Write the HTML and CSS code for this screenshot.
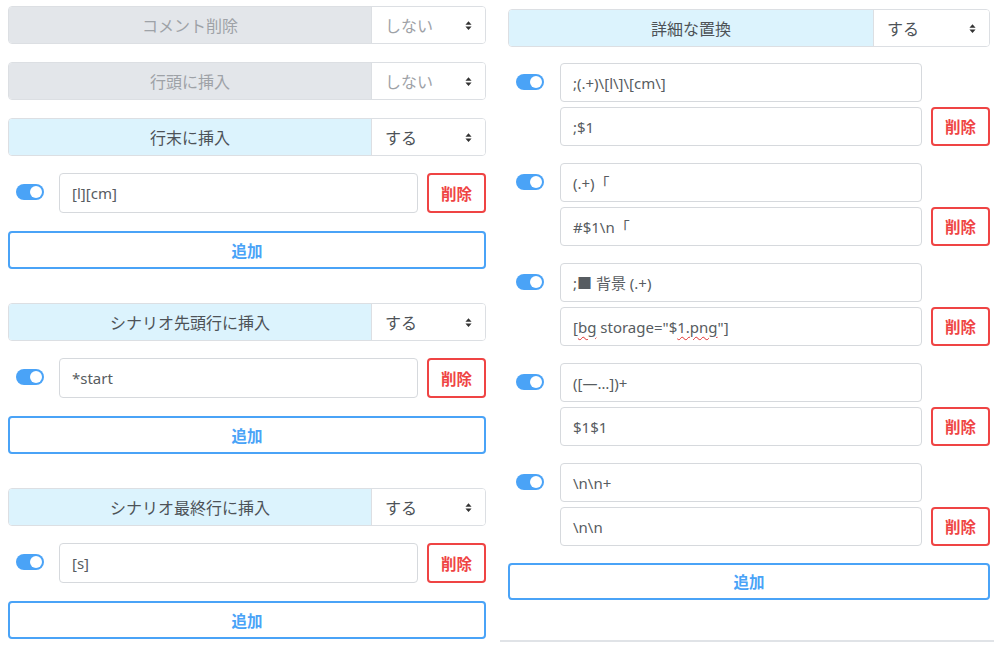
FILE: index.html
```html
<!DOCTYPE html>
<html lang="ja">
<head>
<meta charset="utf-8">
<link rel="stylesheet" href="styles.css">
</head>
<body>
<div class="page">
  <div class="col col-left">
    <div class="setting">
      <div class="label off">コメント削除</div>
      <div class="select muted">しない<svg class="caret" viewBox="0 0 8 12"><path d="M4 1 L7.5 5 H0.5 Z M4 11 L7.5 7 H0.5 Z"/></svg></div>
    </div>
    <div class="setting">
      <div class="label off">行頭に挿入</div>
      <div class="select muted">しない<svg class="caret" viewBox="0 0 8 12"><path d="M4 1 L7.5 5 H0.5 Z M4 11 L7.5 7 H0.5 Z"/></svg></div>
    </div>
    <div class="setting last">
      <div class="label on">行末に挿入</div>
      <div class="select">する<svg class="caret" viewBox="0 0 8 12"><path d="M4 1 L7.5 5 H0.5 Z M4 11 L7.5 7 H0.5 Z"/></svg></div>
    </div>
    <div class="entry">
      <span class="toggle"></span>
      <div class="field">[l][cm]</div>
      <button class="del">削除</button>
    </div>
    <button class="add">追加</button>

    <div class="setting section last">
      <div class="label on">シナリオ先頭行に挿入</div>
      <div class="select">する<svg class="caret" viewBox="0 0 8 12"><path d="M4 1 L7.5 5 H0.5 Z M4 11 L7.5 7 H0.5 Z"/></svg></div>
    </div>
    <div class="entry">
      <span class="toggle"></span>
      <div class="field">*start</div>
      <button class="del">削除</button>
    </div>
    <button class="add">追加</button>

    <div class="setting section last">
      <div class="label on">シナリオ最終行に挿入</div>
      <div class="select">する<svg class="caret" viewBox="0 0 8 12"><path d="M4 1 L7.5 5 H0.5 Z M4 11 L7.5 7 H0.5 Z"/></svg></div>
    </div>
    <div class="entry">
      <span class="toggle"></span>
      <div class="field">[s]</div>
      <button class="del">削除</button>
    </div>
    <button class="add">追加</button>
  </div>

  <div class="col col-right">
    <div class="setting">
      <div class="label on">詳細な置換</div>
      <div class="select wide">する<svg class="caret" viewBox="0 0 8 12"><path d="M4 1 L7.5 5 H0.5 Z M4 11 L7.5 7 H0.5 Z"/></svg></div>
    </div>

    <div class="pair">
      <span class="toggle"></span>
      <div class="fields">
        <div class="row"><div class="field">;(.+)\[l\]\[cm\]</div><span class="spacer"></span></div>
        <div class="row"><div class="field">;$1</div><button class="del">削除</button></div>
      </div>
    </div>
    <div class="pair">
      <span class="toggle"></span>
      <div class="fields">
        <div class="row"><div class="field">(.+)「</div><span class="spacer"></span></div>
        <div class="row"><div class="field">#$1\n「</div><button class="del">削除</button></div>
      </div>
    </div>
    <div class="pair">
      <span class="toggle"></span>
      <div class="fields">
        <div class="row"><div class="field">;■ 背景 (.+)</div><span class="spacer"></span></div>
        <div class="row"><div class="field">[<span class="typo">bg</span> storage="$<span class="typo">1.png</span>"]</div><button class="del">削除</button></div>
      </div>
    </div>
    <div class="pair">
      <span class="toggle"></span>
      <div class="fields">
        <div class="row"><div class="field">([—…])+</div><span class="spacer"></span></div>
        <div class="row"><div class="field">$1$1</div><button class="del">削除</button></div>
      </div>
    </div>
    <div class="pair">
      <span class="toggle"></span>
      <div class="fields">
        <div class="row"><div class="field">\n\n+</div><span class="spacer"></span></div>
        <div class="row"><div class="field">\n\n</div><button class="del">削除</button></div>
      </div>
    </div>
    <button class="add add-right">追加</button>
    <div class="rule"></div>
  </div>
</div>
</body>
</html>
```

FILE: styles.css
```css
* { box-sizing: border-box; }
html, body { margin: 0; padding: 0; background: #fff; }
body {
  font-family: "Noto Sans", "Noto Sans CJK JP", sans-serif;
  font-size: 15px;
  color: #495057;
  width: 994px;
  height: 645px;
  overflow: hidden;
}
.page {
  display: grid;
  grid-template-columns: 500px 494px;
}
.col { display: flex; flex-direction: column; }
.col-left { padding: 6px 14px 0 8px; }
.col-right { padding: 9px 4px 0 8px; }

.setting {
  display: flex;
  height: 38px;
  border: 1px solid #dcdfe3;
  border-radius: 4px;
  overflow: hidden;
  margin-bottom: 18px;
}
.setting.last { margin-bottom: 17px; }
.setting.section { margin-top: 34px; }
.col-right .setting { margin-bottom: 16px; }
.label {
  flex: 1;
  display: flex;
  align-items: center;
  justify-content: center;
  border-right: 1px solid #dcdfe3;
  font-size: 16px;
}
.label.off { background: #e3e6ea; color: #9ea2a7; }
.label.on { background: #dcf3fd; color: #4d5257; }
.select {
  width: 113px;
  display: flex;
  align-items: center;
  justify-content: space-between;
  padding: 0 13px 0 13px;
  background: #fff;
  color: #4d5257;
  font-size: 16px;
}
.select.wide { width: 115px; }
.select.muted { color: #9ea2a7; }
.caret { width: 7px; height: 11px; fill: #333; }

.entry {
  display: flex;
  align-items: center;
  height: 40px;
  margin-bottom: 18px;
}
.toggle {
  position: relative;
  flex: none;
  width: 28px;
  height: 16px;
  border-radius: 8px;
  background: #4aa3f7;
  margin: 0 15px 0 8px;
}
.toggle::after {
  content: "";
  position: absolute;
  right: 2px;
  top: 2px;
  width: 12px;
  height: 12px;
  border-radius: 50%;
  background: #fff;
}
.entry .toggle { margin-bottom: 3px; }
.field {
  flex: 1;
  height: 40px;
  display: flex;
  align-items: center;
  padding: 0 12px;
  border: 1px solid #d6d9dd;
  border-radius: 4px;
  color: #575c61;
  white-space: pre;
}
.del {
  flex: none;
  width: 59px;
  height: 40px;
  margin-left: 9px;
  border: 2px solid #ef4444;
  border-radius: 4px;
  background: #fff;
  color: #ef4444;
  font-family: inherit;
  font-size: 15.5px;
  font-weight: 700;
  padding: 0;
}
.add {
  height: 38px;
  border: 2px solid #4aa3f7;
  border-radius: 4px;
  background: #fff;
  color: #4aa3f7;
  font-family: inherit;
  font-size: 15.5px;
  font-weight: 700;
  padding: 0;
}

.pair {
  display: flex;
  align-items: flex-start;
  margin-bottom: 17px;
}
.pair .toggle { margin-top: 11px; margin-right: 16px; }
.fields { flex: 1; display: flex; flex-direction: column; gap: 5px; }
.row { display: flex; align-items: center; }
.row .field { height: 39px; }
.row .del { height: 39px; }
.spacer { width: 68px; flex: none; }
.add-right { height: 37px; width: 482px; }
.typo {
  text-decoration: underline wavy #e03030;
  text-decoration-thickness: 1px;
  text-underline-offset: 3px;
}
.rule {
  margin: 40px -4px 0 -8px;
  height: 2px;
  background: #e0e3e7;
}
```
